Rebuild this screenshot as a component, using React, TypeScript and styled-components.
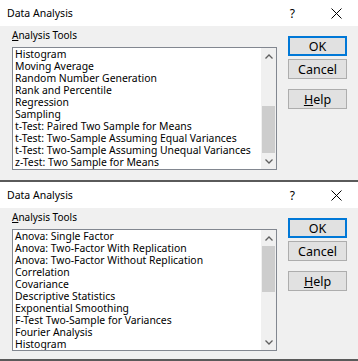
import React from 'react';
import styled, { createGlobalStyle } from 'styled-components';

const GlobalStyle = createGlobalStyle`
  html, body {
    margin: 0;
    padding: 0;
    background: #f0f0f0;
  }
  body {
    font-family: "Noto Sans", "Open Sans", sans-serif;
    color: #000;
  }
`;

const firstTools = [
  'Histogram',
  'Moving Average',
  'Random Number Generation',
  'Rank and Percentile',
  'Regression',
  'Sampling',
  't-Test: Paired Two Sample for Means',
  't-Test: Two-Sample Assuming Equal Variances',
  't-Test: Two-Sample Assuming Unequal Variances',
  'z-Test: Two Sample for Means',
];

const secondTools = [
  'Anova: Single Factor',
  'Anova: Two-Factor With Replication',
  'Anova: Two-Factor Without Replication',
  'Correlation',
  'Covariance',
  'Descriptive Statistics',
  'Exponential Smoothing',
  'F-Test Two-Sample for Variances',
  'Fourier Analysis',
  'Histogram',
];

const Chevron: React.FC<{ up?: boolean }> = ({ up }) => (
  <svg width="8" height="5" viewBox="0 0 8 5">
    <polyline
      points={up ? '0.5,4.5 4,1 7.5,4.5' : '0.5,0.5 4,4 7.5,0.5'}
      fill="none"
      stroke="#606060"
      strokeWidth="1.3"
    />
  </svg>
);

const CloseIcon = () => (
  <svg width="11" height="11" viewBox="0 0 11 11">
    <path d="M0.5 0.5 L10.5 10.5 M10.5 0.5 L0.5 10.5" stroke="#000" strokeWidth="1" />
  </svg>
);

interface DialogProps {
  tools: string[];
  bodyHeight: number;
  listHeight: number;
  thumbTop: number;
  thumbHeight: number;
}

const Dialog: React.FC<DialogProps> = ({ tools, bodyHeight, listHeight, thumbTop, thumbHeight }) => (
  <Window>
    <TitleBar>
      <Title>Data Analysis</Title>
      <TitleButtons>
        <HelpMark>?</HelpMark>
        <CloseIcon />
      </TitleButtons>
    </TitleBar>
    <Body style={{ height: bodyHeight }}>
      <ToolsColumn>
        <Label>
          <u>A</u>nalysis Tools
        </Label>
        <ListBox style={{ height: listHeight }}>
          <Items>
            {tools.map((t, i) => (
              <Item key={i}>{t}</Item>
            ))}
          </Items>
          <ScrollBar>
            <Arrow>
              <Chevron up />
            </Arrow>
            <Track>
              <Thumb style={{ top: thumbTop, height: thumbHeight }} />
            </Track>
            <Arrow>
              <Chevron />
            </Arrow>
          </ScrollBar>
        </ListBox>
      </ToolsColumn>
      <Buttons>
        <Button $primary>OK</Button>
        <Button>Cancel</Button>
        <Button $gap>
          <u>H</u>elp
        </Button>
      </Buttons>
    </Body>
  </Window>
);

const App: React.FC = () => (
  <>
    <GlobalStyle />
    <Page>
      <Dialog tools={firstTools} bodyHeight={154} listHeight={123} thumbTop={42} thumbHeight={47} />
      <Dialog tools={secondTools} bodyHeight={151} listHeight={122} thumbTop={0} thumbHeight={46} />
    </Page>
  </>
);

const Page = styled.div`
  width: 358px;
  height: 361px;
  overflow: hidden;
  display: flex;
  flex-direction: column;
`;

const Window = styled.div`
  display: flex;
  flex-direction: column;
  border-bottom: 2px solid #5a5a5a;
  flex-shrink: 0;
`;

const TitleBar = styled.div`
  height: 26px;
  background: #fff;
  display: flex;
  align-items: center;
  justify-content: space-between;
  padding: 0 16px 0 7px;
`;

const Title = styled.span`
  font-size: 10.5px;
`;

const TitleButtons = styled.div`
  display: flex;
  align-items: center;
  gap: 36px;
`;

const HelpMark = styled.span`
  font-size: 12px;
`;

const Body = styled.div`
  background: #f0f0f0;
  display: flex;
  padding: 0 11px 0 12px;
  justify-content: space-between;
`;

const ToolsColumn = styled.div`
  display: flex;
  flex-direction: column;
  padding-top: 3px;
`;

const Label = styled.div`
  font-size: 10px;
  height: 12px;
  line-height: 12px;
  margin: 0 0 6px;
`;

const ListBox = styled.div`
  width: 265px;
  border: 1px solid #828790;
  background: #fff;
  display: flex;
  box-sizing: border-box;
`;

const Items = styled.div`
  flex: 1;
  padding: 0 0 0 2px;
  overflow: hidden;
`;

const Item = styled.div`
  font-size: 10.4px;
  line-height: 12px;
  height: 12px;
  white-space: nowrap;
`;

const ScrollBar = styled.div`
  width: 15px;
  background: #f0f0f0;
  display: flex;
  flex-direction: column;
`;

const Arrow = styled.div`
  height: 16px;
  display: flex;
  align-items: center;
  justify-content: center;
`;

const Track = styled.div`
  flex: 1;
  position: relative;
`;

const Thumb = styled.div`
  position: absolute;
  left: 1px;
  right: 1px;
  background: #cdcdcd;
`;

const Buttons = styled.div`
  display: flex;
  flex-direction: column;
  gap: 3px;
  padding-top: 10px;
`;

const Button = styled.button<{ $primary?: boolean; $gap?: boolean }>`
  width: 59px;
  height: 20px;
  box-sizing: border-box;
  background: #e1e1e1;
  border: ${(p) => (p.$primary ? '2px solid #0078d7' : '1px solid #adadad')};
  font-family: "Noto Sans", "Open Sans", sans-serif;
  font-size: 12.5px;
  color: #000;
  padding: 0;
  margin-top: ${(p) => (p.$gap ? '7px' : '0')};
  display: flex;
  align-items: center;
  justify-content: center;
`;

export default App;
